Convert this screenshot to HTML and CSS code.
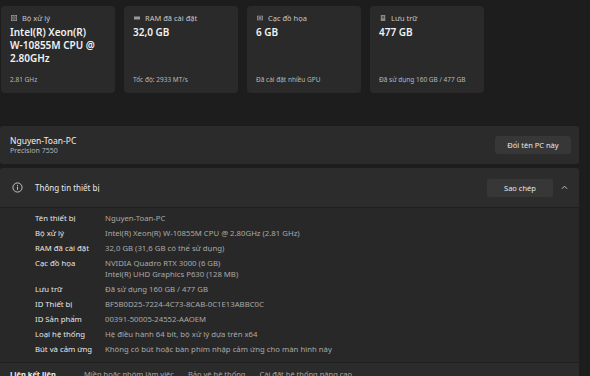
FILE: index.html
```html
<!DOCTYPE html>
<html lang="vi">
<head>
    <meta charset="UTF-8">
    <meta name="viewport" content="width=device-width, initial-scale=1.0">
    <title>Giới thiệu</title>
    <link rel="stylesheet" href="styles.css">
</head>
<body>
    <div class="page">
        <div class="cards">
            <div class="card">
                <div class="card-label">
                    <svg class="card-icon" viewBox="0 0 8 8"><rect x="0.5" y="0.5" width="7" height="7" fill="none" stroke="#9a9a9a"/><rect x="2.5" y="2.5" width="3" height="3" fill="none" stroke="#9a9a9a"/></svg>
                    Bộ xử lý
                </div>
                <div class="card-value">Intel(R) Xeon(R) W-10855M CPU @ 2.80GHz</div>
                <div class="card-note">2.81 GHz</div>
            </div>
            <div class="card">
                <div class="card-label">
                    <svg class="card-icon" viewBox="0 0 8 8"><rect x="0" y="2" width="8" height="4" fill="#9a9a9a"/></svg>
                    RAM đã cài đặt
                </div>
                <div class="card-value">32,0 GB</div>
                <div class="card-note">Tốc độ: 2933 MT/s</div>
            </div>
            <div class="card">
                <div class="card-label">
                    <svg class="card-icon" viewBox="0 0 8 8"><rect x="0.5" y="1.5" width="7" height="5" fill="none" stroke="#9a9a9a"/><rect x="2" y="3" width="4" height="2" fill="#9a9a9a"/></svg>
                    Cạc đồ họa
                </div>
                <div class="card-value">6 GB</div>
                <div class="card-note">Đã cài đặt nhiều GPU</div>
            </div>
            <div class="card">
                <div class="card-label">
                    <svg class="card-icon" viewBox="0 0 8 8"><rect x="1" y="0" width="6" height="8" fill="#8a8a8a"/><rect x="2.5" y="1.5" width="3" height="3" fill="#555"/></svg>
                    Lưu trữ
                </div>
                <div class="card-value">477 GB</div>
                <div class="card-note">Đã sử dụng 160 GB / 477 GB</div>
            </div>
        </div>

        <div class="panel pc-row">
            <div>
                <div class="pc-name">Nguyen-Toan-PC</div>
                <div class="pc-model">Precision 7550</div>
            </div>
            <button class="btn">Đổi tên PC này</button>
        </div>

        <div class="panel device">
            <div class="device-head">
                <svg class="info-icon" viewBox="0 0 12 12"><circle cx="6" cy="6" r="5" fill="none" stroke="#d0d0d0" stroke-width="1"/><rect x="5.5" y="5" width="1" height="3.5" fill="#d0d0d0"/><rect x="5.5" y="3.2" width="1" height="1" fill="#d0d0d0"/></svg>
                <span class="device-title">Thông tin thiết bị</span>
                <button class="btn btn-copy">Sao chép</button>
                <svg class="chevron" viewBox="0 0 8 5"><polyline points="1,4 4,1 7,4" fill="none" stroke="#d0d0d0" stroke-width="1"/></svg>
            </div>
            <div class="specs">
                <div class="spec"><span class="spec-key">Tên thiết bị</span><span class="spec-val">Nguyen-Toan-PC</span></div>
                <div class="spec"><span class="spec-key">Bộ xử lý</span><span class="spec-val">Intel(R) Xeon(R) W-10855M CPU @ 2.80GHz (2.81 GHz)</span></div>
                <div class="spec"><span class="spec-key">RAM đã cài đặt</span><span class="spec-val">32,0 GB (31,6 GB có thể sử dụng)</span></div>
                <div class="spec"><span class="spec-key">Cạc đồ họa</span><span class="spec-val">NVIDIA Quadro RTX 3000 (6 GB)<br>Intel(R) UHD Graphics P630 (128 MB)</span></div>
                <div class="spec"><span class="spec-key">Lưu trữ</span><span class="spec-val">Đã sử dụng 160 GB / 477 GB</span></div>
                <div class="spec"><span class="spec-key">ID Thiết bị</span><span class="spec-val">BF5B0D25-7224-4C73-8CAB-0C1E13ABBC0C</span></div>
                <div class="spec"><span class="spec-key">ID Sản phẩm</span><span class="spec-val">00391-50005-24552-AAOEM</span></div>
                <div class="spec"><span class="spec-key">Loại hệ thống</span><span class="spec-val">Hệ điều hành 64 bit, bộ xử lý dựa trên x64</span></div>
                <div class="spec"><span class="spec-key">Bút và cảm ứng</span><span class="spec-val">Không có bút hoặc bàn phím nhập cảm ứng cho màn hình này</span></div>
            </div>
            <div class="links">
                <span class="links-title">Liên kết liên quan</span>
                <span class="link">Miền hoặc nhóm làm việc</span>
                <span class="link">Bảo vệ hệ thống</span>
                <span class="link">Cài đặt hệ thống nâng cao</span>
            </div>
        </div>
    </div>
</body>
</html>
```
FILE: styles.css
```css
body {
    margin: 0;
    background-color: #1d1d1d;
    font-family: "Noto Sans", sans-serif;
    color: #ffffff;
    overflow: hidden;
}

.page {
    width: 579px;
    padding-top: 6px;
}

.cards {
    display: flex;
    gap: 9px;
    padding-left: 1px;
}

.card {
    width: 114px;
    height: 87px;
    box-sizing: border-box;
    background-color: #2a2a2a;
    border-radius: 4px;
    padding: 8px 9px 0 9px;
    display: flex;
    flex-direction: column;
}

.card-label {
    display: flex;
    align-items: center;
    gap: 5px;
    font-size: 7.5px;
    color: #c8c8c8;
    height: 8px;
    line-height: 8px;
}

.card-icon {
    width: 6px;
    height: 6px;
    margin-left: 1px;
}

.card-value {
    margin-top: 4px;
    max-width: 86px;
    font-size: 10px;
    font-weight: 600;
    line-height: 13px;
    color: #f2f2f2;
}

.card-note {
    margin-top: auto;
    margin-bottom: 9px;
    font-size: 6.5px;
    color: #b8b8b8;
}

.panel {
    background-color: #2b2b2b;
    border-radius: 3px;
}

.pc-row {
    margin-top: 33px;
    height: 38px;
    display: flex;
    align-items: center;
    justify-content: space-between;
    padding: 0 8px 0 10px;
}

.pc-name {
    font-size: 8.5px;
    line-height: 11px;
    color: #f0f0f0;
}

.pc-model {
    font-size: 7px;
    line-height: 9px;
    color: #b4b4b4;
}

.btn {
    background-color: #373737;
    border: none;
    border-radius: 3px;
    color: #e8e8e8;
    font-family: "Noto Sans", sans-serif;
    font-size: 7.5px;
    height: 18px;
    width: 76px;
    padding: 0;
}

.device {
    margin-top: 4px;
    background-color: #282828;
}

.device-head {
    height: 39px;
    display: flex;
    align-items: center;
    background-color: #2c2c2c;
    border-bottom: 1px solid #1f1f1f;
    border-radius: 3px 3px 0 0;
    padding-left: 12px;
}

.info-icon {
    width: 11px;
    height: 11px;
}

.device-title {
    margin-left: 12px;
    font-size: 8px;
    color: #e8e8e8;
    flex-grow: 1;
}

.btn-copy {
    width: 66px;
}

.chevron {
    width: 7px;
    height: 5px;
    margin: 0 11px 0 8px;
}

.specs {
    padding: 3px 0 5px 35px;
    border-bottom: 1px solid #1f1f1f;
}

.spec {
    display: flex;
    padding: 2px 0;
    font-size: 7.75px;
    line-height: 11px;
}

.spec-key {
    width: 70px;
    color: #e6e6e6;
}

.spec-val {
    color: #a8a8a8;
}

.links {
    display: flex;
    gap: 14px;
    padding: 6px 10px 8px 10px;
    font-size: 7.5px;
    background-color: #2b2b2b;
}

.links-title {
    font-weight: 700;
    width: 60px;
    color: #f0f0f0;
}

.link {
    color: #a8a8a8;
}
```
